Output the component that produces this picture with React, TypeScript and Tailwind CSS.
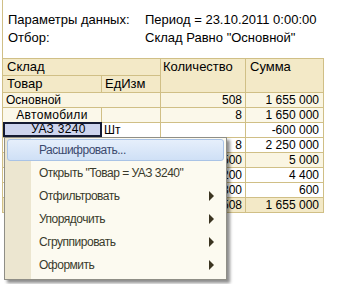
import React from "react";

const LINE = "border-[#d0bf86]";

type Row = {
  c1?: string;
  c2?: string;
  c3: string;
  c4: string;
  bg: string;
  span?: boolean;
  indent?: string;
  sel?: boolean;
};

const rows: Row[] = [
  { c1: "Основной", c3: "508", c4: "1 655 000", bg: "bg-[#faf5e2]", span: true },
  { c1: "Автомобили", c2: "", c3: "8", c4: "1 650 000", bg: "bg-[#fbf8ea]", indent: "center" },
  { c1: "УАЗ 3240", c2: "Шт", c3: "", c4: "-600 000", bg: "bg-white", sel: true },
  { c1: "", c2: "", c3: "8", c4: "2 250 000", bg: "bg-white" },
  { c1: "", c2: "", c3: "500", c4: "5 000", bg: "bg-[#faf5e2]" },
  { c1: "", c2: "", c3: "200", c4: "4 400", bg: "bg-white" },
  { c1: "", c2: "", c3: "300", c4: "600", bg: "bg-white" },
  { c1: "", c2: "", c3: "508", c4: "1 655 000", bg: "bg-[#f3e9c7]", span: true },
];

function Arrow() {
  return (
    <svg width="6" height="10" viewBox="0 0 6 10" className="shrink-0">
      <path d="M0 0 L5 5 L0 10 Z" fill="#3b3421" />
    </svg>
  );
}

export default function App() {
  const menu = [
    { t: "Расшифровать...", arrow: false, hi: true },
    { t: 'Открыть "Товар = УАЗ 3240"', arrow: false },
    { t: "Отфильтровать", arrow: true },
    { t: "Упорядочить", arrow: true },
    { t: "Сгруппировать", arrow: true },
    { t: "Оформить", arrow: true },
  ];
  return (
    <div
      className="relative w-[344px] h-[284px] bg-white overflow-hidden text-black"
      style={{ fontFamily: '"Liberation Sans", Arial, sans-serif' }}
    >
      <div className={`ml-[2px] border-l ${LINE} w-[322px]`}>
        <div className="h-[58px] pt-[11px] pl-[5px] text-[13px] leading-[18px]">
          <div className="flex">
            <span className="w-[137px]">Параметры данных:</span>
            <span>Период = 23.10.2011 0:00:00</span>
          </div>
          <div className="flex">
            <span className="w-[137px]">Отбор:</span>
            <span>Склад Равно "Основной"</span>
          </div>
        </div>
        <div className={`grid grid-cols-[99px_59px_85px_78px] border-t ${LINE} text-[12px]`}>
          <div className={`col-span-2 h-[17px] border-r border-b ${LINE} bg-[#f3e9c7] pl-[4px] text-[13px] leading-[16px]`}>
            Склад
          </div>
          <div className={`row-span-2 border-r border-b ${LINE} bg-[#f3e9c7] pl-[2px] text-[13px] leading-[16px]`}>
            Количество
          </div>
          <div className={`row-span-2 border-r border-b ${LINE} bg-[#f3e9c7] pl-[4px] text-[13px] leading-[16px]`}>
            Сумма
          </div>
          <div className={`h-[17px] border-r border-b ${LINE} bg-[#f3e9c7] pl-[4px] text-[13px] leading-[16px]`}>
            Товар
          </div>
          <div className={`h-[17px] border-r border-b ${LINE} bg-[#f3e9c7] pl-[3px] text-[13px] leading-[16px]`}>
            ЕдИзм
          </div>
          {rows.map((r, i) => (
            <React.Fragment key={i}>
              {r.span ? (
                <div className={`col-span-2 h-[15px] border-r border-b ${LINE} ${r.bg} pl-[3px] leading-[14px]`}>
                  {r.c1}
                </div>
              ) : (
                <>
                  {r.sel ? (
                    <div className={`h-[15px] border-b ${LINE} bg-white`}>
                      <div className="h-[15px] -mt-[1px] border-2 border-[#141a33] bg-[#cdd4ee] pl-[12px] text-center leading-[11px] tracking-[0.3px]">
                        {r.c1}
                      </div>
                    </div>
                  ) : (
                    <div
                      className={`h-[15px] border-r border-b ${LINE} ${r.bg} leading-[14px] ${
                        r.indent === "center" ? "text-center tracking-[0.3px]" : "pl-[3px]"
                      }`}
                    >
                      {r.c1}
                    </div>
                  )}
                  <div className={`h-[15px] border-r border-b ${LINE} ${r.sel ? "bg-white" : r.bg} pl-[2px] leading-[14px]`}>
                    {r.c2}
                  </div>
                </>
              )}
              <div className={`h-[15px] border-r border-b ${LINE} ${r.bg} pr-[3px] text-right leading-[14px]`}>
                {r.c3}
              </div>
              <div className={`h-[15px] border-r border-b ${LINE} ${r.bg} pr-[4px] text-right leading-[14px]`}>
                {r.c4}
              </div>
            </React.Fragment>
          ))}
        </div>
      </div>

      <div className="absolute left-[4px] top-[137px] w-[223px] h-[143px] border border-[#8f8e86] bg-[#fcfaf0] shadow-[3px_3px_3px_rgba(0,0,0,0.45)]">
        <div className="absolute left-0 top-0 bottom-0 w-[26px] bg-[#ece6d0]" />
        <div className="relative flex flex-col pt-[1px]">
          {menu.map((m, i) => (
            <div key={i} className="h-[23px] px-[2px]">
              <div
                className={`h-[22px] flex items-center pl-[31px] pr-[8px] text-[12px] tracking-[-0.5px] ${
                  m.hi
                    ? "rounded-[3px] border border-[#a9c3e6] bg-gradient-to-b from-[#e6effb] to-[#cfe0f6] text-[#3c4a6e]"
                    : "border border-transparent text-[#3a3a2c]"
                }`}
              >
                <span className="flex-1">{m.t}</span>
                {m.arrow && <Arrow />}
              </div>
            </div>
          ))}
        </div>
      </div>
    </div>
  );
}
